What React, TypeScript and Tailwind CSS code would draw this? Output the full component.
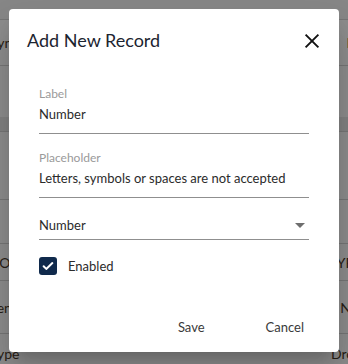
import React, { useState } from 'react';

const rows = [
  { h: 'h-[20px]', left: '', right: '', border: true, bg: 'bg-[#f4f4f4]' },
  { h: 'h-[46px]', left: 'Syn', right: 'Dr', border: true, bg: 'bg-white' },
  { h: 'h-[51px]', left: '', right: '', border: false, bg: 'bg-white' },
  { h: 'h-[15px]', left: '', right: '', border: true, bg: 'bg-[#ececec]' },
  { h: 'h-[68px]', left: '', right: '', border: true, bg: 'bg-white' },
  { h: 'h-[44px]', left: '', right: '', border: true, bg: 'bg-white' },
  { h: 'h-[37px]', left: 'CODE', right: 'TYPE', border: true, bg: 'bg-white' },
  { h: 'h-[53px]', left: 'Length', right: 'Nul', border: true, bg: 'bg-white' },
  { h: 'h-[30px]', left: 'Type', right: 'Drop', border: false, bg: 'bg-white' },
];

function BackgroundTable() {
  return (
    <div className="flex flex-col w-[348px] h-[364px] overflow-hidden">
      {rows.map((r, i) => (
        <div
          key={i}
          className={`${r.h} ${r.bg} shrink-0 flex justify-between ${i === 8 ? 'items-end' : 'items-center'} ${r.border ? 'border-b border-[#d6d6d6]' : ''}`}
        >
          <span className="-ml-[10px] text-[14px] text-[#4a3a2a]">{r.left}</span>
          <span className="-mr-[14px] text-[14px] text-[#4a3a2a]">{r.right}</span>
        </div>
      ))}
    </div>
  );
}

function TextField({ label, value }: { label: string; value: string }) {
  return (
    <div className="flex flex-col pb-[9px] border-b border-[#8f8f8f]">
      <span className="text-[12px] leading-[16px] text-[#9a9a9a]">{label}</span>
      <span className="mt-[2px] text-[13px] leading-[20px] text-[#2b2b2b]">{value}</span>
    </div>
  );
}

export default function App() {
  const [enabled, setEnabled] = useState(true);

  return (
    <div className="relative w-[348px] h-[364px] overflow-hidden" style={{ fontFamily: 'Lato, "Open Sans", sans-serif' }}>
      <BackgroundTable />
      <div className="absolute inset-0 bg-black/45" />

      <div className="absolute left-[9px] top-[9px] w-[330px] bg-white rounded-[4px] shadow-[0_11px_15px_-7px_rgba(0,0,0,0.2),0_24px_38px_3px_rgba(0,0,0,0.14)] flex flex-col">
        <div className="flex items-start justify-between pl-[18px] pr-[15px] pt-[17px]">
          <h2 className="text-[18px] leading-[28px] text-[#1c2430]">Add New Record</h2>
          <button className="mt-[3px] text-[#111]" aria-label="close">
            <svg width="24" height="24" viewBox="0 0 24 24" fill="none" stroke="currentColor" strokeWidth="1.9">
              <path d="M5.6 5.6l12.8 12.8M18.4 5.6 5.6 18.4" />
            </svg>
          </button>
        </div>

        <div className="flex flex-col px-[30px] mt-[32px]">
          <TextField label="Label" value="Number" />
          <div className="mt-[16px]">
            <TextField label="Placeholder" value="Letters, symbols or spaces are not accepted" />
          </div>
          <div className="mt-[17px] flex items-center justify-between pb-[4px] border-b border-[#8f8f8f]">
            <span className="text-[13px] leading-[20px] text-[#2b2b2b]">Number</span>
            <svg width="24" height="24" viewBox="0 0 24 24" className="-mr-[3px] -my-[2px] text-[#6e6e6e]" fill="currentColor">
              <path d="M7 10l5 5 5-5z" />
            </svg>
          </div>

          <label className="mt-[17px] flex items-center gap-[11px] h-[18px] cursor-pointer">
            <button
              onClick={() => setEnabled(!enabled)}
              className={`w-[18px] h-[18px] rounded-[3px] flex items-center justify-center ${enabled ? 'bg-[#102a4c]' : 'border-2 border-[#777]'}`}
            >
              {enabled && (
                <svg width="14" height="14" viewBox="0 0 24 24" fill="none" stroke="white" strokeWidth="3.4" strokeLinecap="round" strokeLinejoin="round">
                  <path d="M4.5 12.5l4.5 4.5L19.5 7" />
                </svg>
              )}
            </button>
            <span className="text-[13px] leading-[20px] text-[#2b2b2b]">Enabled</span>
          </label>
        </div>

        <div className="flex justify-end gap-[29px] pr-[19px] mt-[34px] pb-[7px]">
          <button className="h-[36px] px-[16px] text-[13px] leading-[20px] text-[#3a3a3a]">Save</button>
          <button className="h-[36px] px-[16px] text-[13px] leading-[20px] text-[#3a3a3a]">Cancel</button>
        </div>
      </div>
    </div>
  );
}
